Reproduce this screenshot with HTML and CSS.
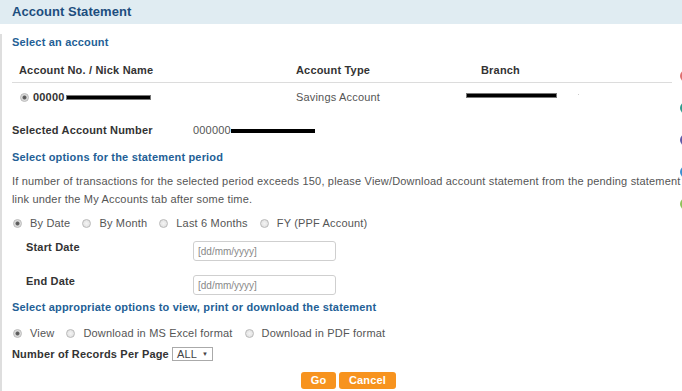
FILE: index.html
```html
<!DOCTYPE html>
<html lang="en">

<head>
    <meta charset="UTF-8">
    <title>Account Statement</title>
    <link rel="stylesheet" href="styles.css">
</head>

<body>
    <div class="panel">
        <div class="panel-head">Account Statement</div>
        <div class="panel-body">
            <div class="section-title first">Select an account</div>
            <div class="acc-table">
                <div class="acc-row acc-head">
                    <span class="col-no">Account No. / Nick Name</span>
                    <span class="col-type">Account Type</span>
                    <span class="col-branch">Branch</span>
                </div>
                <div class="acc-row">
                    <span class="col-no"><input type="radio" class="radio" name="acc" checked><b>00000</b><i class="mask mask-no"></i></span>
                    <span class="col-type">Savings Account</span>
                    <span class="col-branch"><i class="mask mask-branch"></i><i class="speck"></i></span>
                </div>
            </div>

            <div class="selected">
                <span class="sel-label">Selected Account Number</span>
                <span class="sel-value">000000<i class="mask mask-sel"></i></span>
            </div>

            <div class="section-title">Select options for the statement period</div>
            <p class="note">If number of transactions for the selected period exceeds 150, please View/Download account statement from the pending statement link under the My Accounts tab after some time.</p>

            <div class="options period">
                <label><input type="radio" class="radio" name="period" checked>By Date</label>
                <label><input type="radio" class="radio" name="period">By Month</label>
                <label><input type="radio" class="radio" name="period">Last 6 Months</label>
                <label><input type="radio" class="radio" name="period">FY (PPF Account)</label>
            </div>

            <div class="date-row">
                <span class="date-label">Start Date</span>
                <input type="text" class="date-input" placeholder="[dd/mm/yyyy]">
            </div>
            <div class="date-row end">
                <span class="date-label">End Date</span>
                <input type="text" class="date-input" placeholder="[dd/mm/yyyy]">
            </div>

            <div class="section-title view-title">Select appropriate options to view, print or download the statement</div>

            <div class="options output">
                <label><input type="radio" class="radio" name="out" checked>View</label>
                <label><input type="radio" class="radio" name="out">Download in MS Excel format</label>
                <label><input type="radio" class="radio" name="out">Download in PDF format</label>
            </div>

            <div class="records">
                <span class="rec-label">Number of Records Per Page</span>
                <span class="rec-select">ALL <span class="arrow">&#9660;</span></span>
            </div>

            <div class="actions">
                <button class="btn">Go</button>
                <button class="btn">Cancel</button>
            </div>
        </div>
    </div>

    <div class="side-dots">
        <span class="dot red"></span>
        <span class="dot teal"></span>
        <span class="dot purple"></span>
        <span class="dot blue"></span>
        <span class="dot green"></span>
    </div>
</body>

</html>
```

FILE: styles.css
```css
html,
body {
    margin: 0;
    padding: 0;
    background: #fff;
}

body {
    font-family: "Liberation Sans", Arial, sans-serif;
    font-size: 11px;
    letter-spacing: 0.18px;
    color: #555;
    overflow: hidden;
}

.panel-head {
    height: 24px;
    line-height: 24px;
    padding-left: 12px;
    background-color: #e0ecf2;
    color: #1d4e7e;
    font-size: 13px;
    font-weight: bold;
    letter-spacing: 0.05px;
}

.panel-body {
    border-left: 2px solid #dedede;
    padding: 0 10px 0 10px;
    height: 367px;
}

.section-title {
    color: #245f96;
    font-weight: bold;
    line-height: 16px;
    margin-top: 11px;
}

.section-title.first {
    margin-top: 10px;
}

.acc-table {
    width: 660px;
    margin-top: 8px;
}

.acc-row {
    display: grid;
    grid-template-columns: 284px 185px 1fr;
    line-height: 28px;
}

.acc-head {
    line-height: 24px;
    color: #333;
    font-weight: bold;
    border-bottom: 1px solid #dcdcdc;
}

.col-no {
    padding-left: 7px;
    display: flex;
    align-items: center;
}

.col-no b {
    color: #333;
}

.col-branch {
    display: flex;
    align-items: center;
}

.mask {
    display: inline-block;
    height: 3px;
    background: #000;
    box-shadow: 0 0 0 1px #777;
}

.mask-no {
    width: 83px;
    margin-left: 2px;
}

.mask-branch {
    width: 89px;
    margin-left: -14px;
    margin-top: -3px;
}

.speck {
    display: inline-block;
    width: 1px;
    height: 1px;
    background: #ccc;
    margin-left: 22px;
    margin-top: -5px;
}

.mask-sel {
    width: 84px;
    height: 4px;
    box-shadow: none;
    vertical-align: 1px;
}

.radio {
    appearance: none;
    -webkit-appearance: none;
    width: 9px;
    height: 9px;
    margin: 0 8px 0 1px;
    border: 1px solid #b9b9b9;
    border-radius: 50%;
    background: radial-gradient(circle, #f4f4f4 0, #dcdcdc 100%);
    box-sizing: border-box;
    flex: none;
}

.radio:checked {
    background: radial-gradient(circle, #555 0, #666 1.6px, #d8d8d8 2.4px, #ececec 100%);
}

.acc-row .radio {
    margin-right: 4px;
}

.selected {
    display: flex;
    line-height: 16px;
    margin-top: 11px;
}

.sel-label {
    width: 181px;
    color: #333;
    font-weight: bold;
}

.note {
    margin: 7px 0 0 0;
    line-height: 18px;
    width: 674px;
}

.options {
    display: flex;
    gap: 11px;
    line-height: 18px;
    margin-top: 6px;
}

.options label {
    display: flex;
    align-items: center;
}

.date-row {
    display: flex;
    align-items: flex-start;
    margin-top: 8px;
}

.date-row.end {
    margin-top: 13px;
}

.date-label {
    width: 167px;
    padding-left: 14px;
    line-height: 14px;
    color: #333;
    font-weight: bold;
}

.date-input {
    margin: 1px 0 0 0;
    width: 143px;
    height: 20px;
    box-sizing: border-box;
    border: 1px solid #cfcfcf;
    border-radius: 3px;
    padding: 0 4px;
    font-family: "Liberation Sans", Arial, sans-serif;
    font-size: 10px;
}

.date-input::placeholder {
    color: #888;
}

.view-title {
    margin-top: 4px;
}

.output {
    margin-top: 9px;
}

.records {
    display: flex;
    align-items: center;
    line-height: 16px;
    margin-top: 4px;
}

.rec-label {
    color: #333;
    font-weight: bold;
    margin-right: 3px;
}

.rec-select {
    display: inline-flex;
    align-items: center;
    height: 14px;
    width: 41px;
    box-sizing: border-box;
    border: 1px solid #aaa;
    padding-left: 4px;
    line-height: 12px;
    color: #444;
}

.arrow {
    font-size: 6px;
    margin-left: 5px;
}

.actions {
    display: flex;
    gap: 3px;
    margin: 10px 0 0 289px;
}

.btn {
    height: 17px;
    padding: 0;
    border: none;
    border-radius: 3px;
    background-color: #f7931e;
    color: #fff;
    font-family: "Liberation Sans", Arial, sans-serif;
    font-size: 11px;
    font-weight: bold;
    letter-spacing: 0.18px;
    line-height: 17px;
}

.btn:first-child {
    width: 35px;
}

.btn:last-child {
    width: 57px;
}

.side-dots {
    position: absolute;
    left: 680px;
    top: 70px;
    display: flex;
    flex-direction: column;
    gap: 20px;
}

.dot {
    display: block;
    width: 12px;
    height: 12px;
    border-radius: 50%;
}

.red {
    background: #e07070;
}

.teal {
    background: #2f9c8c;
}

.purple {
    background: #5f5aa8;
}

.blue {
    background: #3a8ed0;
}

.green {
    background: #8fc25a;
}
```
